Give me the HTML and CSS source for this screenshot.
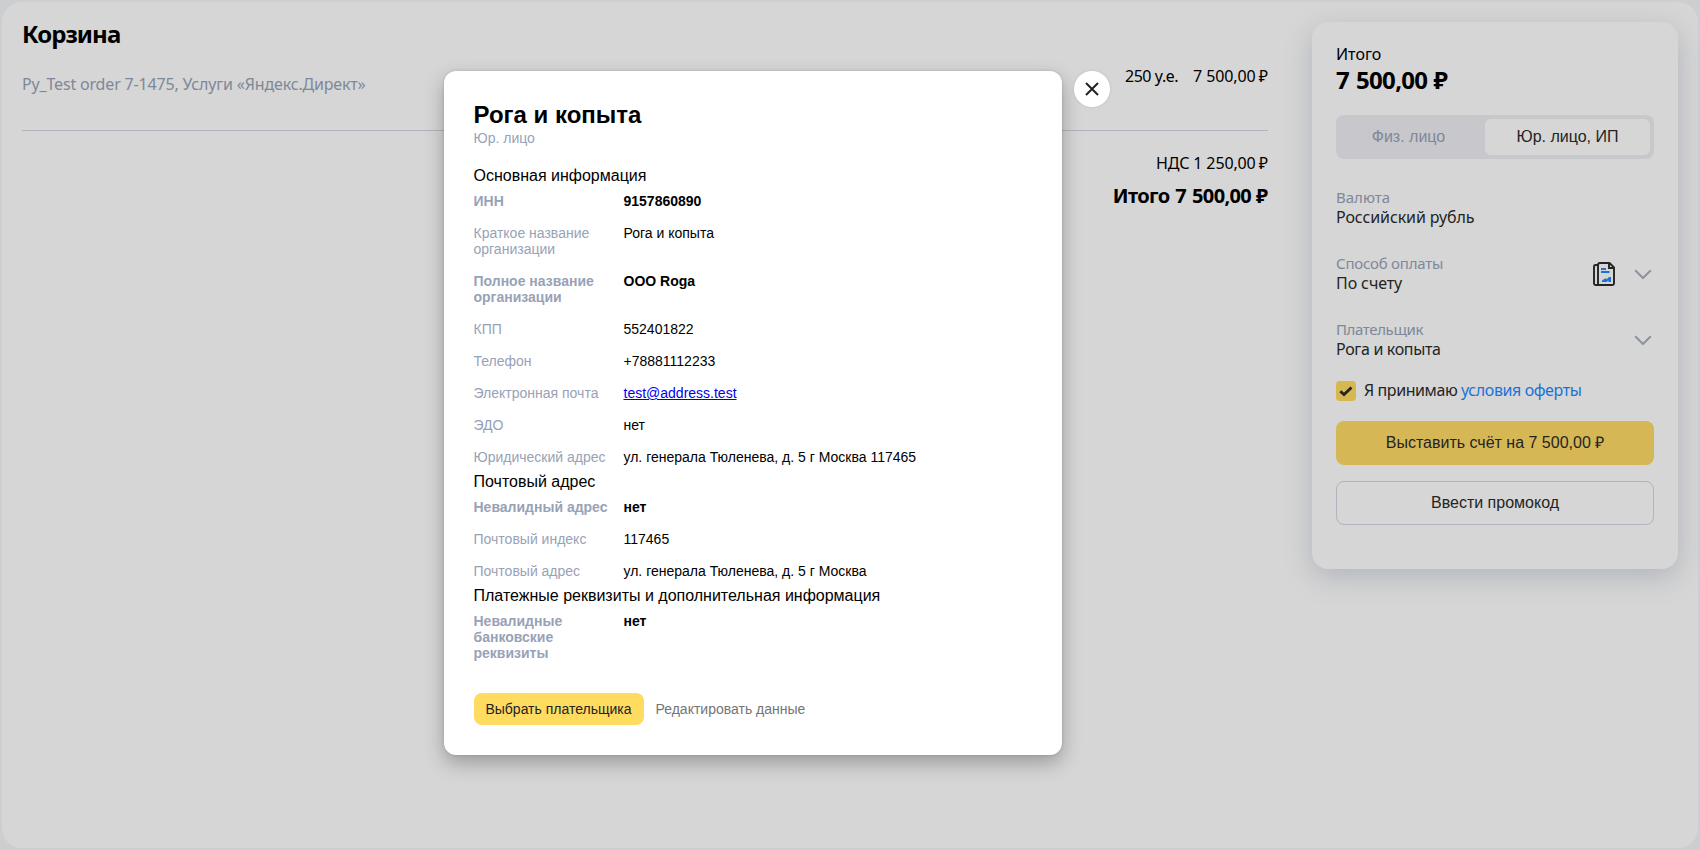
FILE: index.html
```html
<!DOCTYPE html>
<html lang="ru">
<head>
<meta charset="utf-8">
<title>Корзина</title>
<link rel="stylesheet" href="styles.css">
</head>
<body>
<div class="page">
  <main class="cart">
    <h1 class="cart-title"><span class="t-title">Корзина</span></h1>
    <div class="order">
      <span class="order-name t-order">Py_Test order 7-1475, Услуги «Яндекс.Директ»</span>
      <span class="order-qty t-qty">250 у.е.</span>
      <span class="order-sum t-sum">7 500,00 <span class="rub">₽</span></span>
    </div>
    <div class="vat"><span class="t-vat">НДС 1 250,00 <span class="rub">₽</span></span></div>
    <div class="total"><span class="t-total">Итого 7 500,00 <span class="rub">₽</span></span></div>
  </main>
  <aside class="summary">
    <div class="summary-label"><span class="t-slabel">Итого</span></div>
    <div class="summary-sum"><span class="t-ssum">7 500,00 <span class="rub">₽</span></span></div>
    <div class="segment">
      <div class="segment-item">Физ. лицо</div>
      <div class="segment-item segment-active">Юр. лицо, ИП</div>
    </div>
    <div class="field">
      <div><div class="field-label"><span class="t-cur">Валюта</span></div><div class="field-value"><span class="t-currency">Российский рубль</span></div></div>
    </div>
    <div class="field">
      <div><div class="field-label"><span class="t-way">Способ оплаты</span></div><div class="field-value"><span class="t-inv">По счету</span></div></div>
      <svg class="doc" width="24" height="26" viewBox="0 0 24 26" fill="none">
        <path d="M6 4H3.500Q2 4 2 5.500V22.500Q2 24 3.500 24H6" stroke="#2b2b2b" stroke-width="1.900"/>
        <path d="M8 2H17.500L22 6.500V22.500Q22 24 20.500 24H6V4Q6 2 8 2Z" stroke="#2b2b2b" stroke-width="1.900" stroke-linejoin="round"/>
        <path d="M17 2V7H22" stroke="#2b2b2b" stroke-width="1.900"/>
        <path d="M9 8H14M9 11H17.500" stroke="#1f8aff" stroke-width="2"/>
        <path d="M10 21V19.500L13 17.500H14.500V18.500L17 16H19V21H16.500V19.500L14.500 21Z" fill="#1f8aff"/>
      </svg>
      <svg class="chev" width="18" height="11" viewBox="0 0 18 11" fill="none"><path d="M1.200 1.200L9 9L16.800 1.200" stroke="#aab0c2" stroke-width="2"/></svg>
    </div>
    <div class="field">
      <div><div class="field-label"><span class="t-payer">Плательщик</span></div><div class="field-value"><span class="t-roga">Рога и копыта</span></div></div>
      <svg class="chev" width="18" height="11" viewBox="0 0 18 11" fill="none"><path d="M1.200 1.200L9 9L16.800 1.200" stroke="#aab0c2" stroke-width="2"/></svg>
    </div>
    <div class="accept">
      <span class="checkbox"><svg width="14" height="11" viewBox="0 0 14 11" fill="none"><path d="M1.300 5.200L5 8.600L12.500 1.500" stroke="#2b2b2b" stroke-width="2.800"/></svg></span>
      <span class="accept-text t-accept">Я принимаю <a class="offer">условия оферты</a></span>
    </div>
    <button class="pay">Выставить счёт на 7 500,00 ₽</button>
    <button class="promo">Ввести промокод</button>
  </aside>
</div>
<div class="overlay">
  <section class="modal">
    <h2 class="modal-title">Рога и копыта</h2>
    <div class="modal-sub">Юр. лицо</div>
    <h3 class="group">Основная информация</h3>
    <dl class="rows">
      <dt class="strong">ИНН</dt><dd class="strong">9157860890</dd>
      <dt>Краткое название организации</dt><dd>Рога и копыта</dd>
      <dt class="strong">Полное название организации</dt><dd class="strong">ООО Roga</dd>
      <dt>КПП</dt><dd>552401822</dd>
      <dt>Телефон</dt><dd>+78881112233</dd>
      <dt>Электронная почта</dt><dd><a class="mail" href="mailto:test@address.test">test@address.test</a></dd>
      <dt>ЭДО</dt><dd>нет</dd>
      <dt>Юридический адрес</dt><dd>ул. генерала Тюленева, д. 5 г Москва 117465</dd>
    </dl>
    <h3 class="group">Почтовый адрес</h3>
    <dl class="rows">
      <dt class="strong">Невалидный адрес</dt><dd class="strong">нет</dd>
      <dt>Почтовый индекс</dt><dd>117465</dd>
      <dt>Почтовый адрес</dt><dd>ул. генерала Тюленева, д. 5 г Москва</dd>
    </dl>
    <h3 class="group">Платежные реквизиты и дополнительная информация</h3>
    <dl class="rows">
      <dt class="strong">Невалидные банковские реквизиты</dt><dd class="strong">нет</dd>
    </dl>
    <div class="actions">
      <button class="choose">Выбрать плательщика</button>
      <button class="edit">Редактировать данные</button>
    </div>
  </section>
  <button class="close"><svg width="14" height="14" viewBox="0 0 14 14" fill="none"><path d="M1 1L13 13M13 1L1 13" stroke="#222" stroke-width="2"/></svg></button>
</div>
</body>
</html>
```
FILE: styles.css
```css
* { box-sizing: border-box; }
body {
  margin: 0;
  height: 850px;
  overflow: hidden;
  padding: 2px;
  background: #f5f6f7;
  font-family: "Noto Sans", sans-serif;
  font-size: 16px;
  color: #000;
}
button { font-family: "Liberation Sans", Arial, sans-serif; border: 0; padding: 0; }
h1, h2, h3, dl, dd { margin: 0; }
span { white-space: nowrap; }
.page {
  height: 846px;
  border-radius: 20px;
  background: #fff;
  padding: 20px;
  display: flex;
  align-items: flex-start;
  gap: 44px;
  overflow: hidden;
}
.cart { flex: 1; }
.cart-title { font-size: 24px; line-height: 28px; font-weight: 700; margin-top: -2px; }
.order {
  display: flex;
  align-items: flex-start;
  height: 83px;
  padding-top: 16px;
  line-height: 24px;
  border-bottom: 1px solid #d5d7e2;
}
.order-name { color: #98a2b7; flex: 1; padding-top: 8px; }
.order-sum { margin-left: 15px; }
.vat { text-align: right; line-height: 24px; margin-top: 20px; }
.total { text-align: right; font-size: 20px; font-weight: 700; line-height: 28px; margin-top: 7px; }
.rub { margin-left: -1px; letter-spacing: 0; }

.t-title { letter-spacing: -.95px; }
.t-order { letter-spacing: -.17px; }
.t-qty { letter-spacing: -.42px; }
.t-sum { letter-spacing: -.1px; }
.t-vat { letter-spacing: -.13px; }
.t-total { letter-spacing: -.63px; word-spacing: 1.3px; }
.t-ssum { letter-spacing: -.7px; word-spacing: 1.5px; }
.t-way { letter-spacing: -.22px; }
.t-currency, .t-inv { letter-spacing: -.1px; }
.t-payer { letter-spacing: -.38px; }
.t-roga { letter-spacing: -.34px; }
.t-accept { letter-spacing: -.41px; }

.summary {
  width: 366px;
  height: 547px;
  padding: 20px 24px;
  border-radius: 16px;
  background: #fff;
  box-shadow: 0 8px 28px rgba(85, 102, 130, .26);
}
.summary-label { line-height: 24px; }
.summary-sum { font-size: 24px; line-height: 28px; font-weight: 700; }
.segment {
  display: flex;
  height: 44px;
  margin: 21px 0 28px;
  padding: 4px 4px 4px 0;
  border-radius: 8px;
  background: #edeef3;
  font-family: "Liberation Sans", Arial, sans-serif;
  line-height: 36px;
  text-align: center;
}
.segment-item { width: 145px; margin-right: 4px; color: #98a2b7; }
.segment-active { width: 165px; margin-right: 0; border-radius: 6px; background: #fff; color: #2b2b2b; }
.field { display: flex; align-items: center; height: 40px; margin-bottom: 26px; padding-right: 2px; }
.field > div { flex: 1; }
.field-label { font-size: 15px; line-height: 20px; color: #98a2b7; }
.field-value { line-height: 20px; color: #2b2b2b; }
.doc { margin: 2px 18px 0 0; }
.chev { margin-top: 3px; }
.accept { display: flex; align-items: center; gap: 8px; height: 24px; margin-top: -6px; color: #2b2b2b; }
.accept-text { padding-bottom: 2px; }
.checkbox {
  display: flex;
  align-items: center;
  justify-content: center;
  width: 20px;
  height: 20px;
  border-radius: 4px;
  background: #ffdb60;
}
.offer { color: #1f8aff; }
.pay, .promo { display: block; width: 318px; height: 44px; border-radius: 8px; font-size: 16px; color: #2b2b2b; }
.pay { margin-top: 18px; padding-bottom: 2px; background: #ffdb66; }
.promo { margin-top: 16px; background: #fff; border: 1px solid #d5d7e2; }

.overlay {
  position: absolute;
  inset: 0;
  padding: 71px 0 0 444px;
  display: flex;
  align-items: flex-start;
  gap: 12px;
  background: rgba(0, 0, 0, .16);
  font-family: "Liberation Sans", Arial, sans-serif;
}
.modal {
  width: 618px;
  height: 684px;
  padding: 30px 30px 30px 29.5px;
  border-radius: 12px;
  background: #fff;
  box-shadow: 0 8px 20px rgba(0, 0, 0, .28), 0 0 3px rgba(0, 0, 0, .15);
}
.modal-title { font-size: 24px; line-height: 28px; }
.modal-sub { margin: 1px 0 20px; font-size: 14px; line-height: 16px; color: #98a2b7; }
.group { font-size: 16px; line-height: 18px; font-weight: 400; margin: 8px 0; }
.modal-sub + .group { margin-top: 21px; }
.rows { display: grid; grid-template-columns: 134px 1fr; gap: 16px; font-size: 14px; line-height: 16px; }
.rows dt { color: #98a2b7; }
.rows .strong { font-weight: 700; }
.mail { color: #00e; }
.actions { display: flex; gap: 12px; margin-top: 32px; }
.choose, .edit { height: 32px; font-size: 14px; }
.choose { width: 170px; border-radius: 8px; background: #ffdb60; color: #222; }
.edit { background: none; color: #757575; }
.close {
  display: flex;
  align-items: center;
  justify-content: center;
  width: 36px;
  height: 36px;
  border-radius: 50%;
  background: #fff;
  box-shadow: 0 0 3px rgba(0, 0, 0, .12);
}
```
